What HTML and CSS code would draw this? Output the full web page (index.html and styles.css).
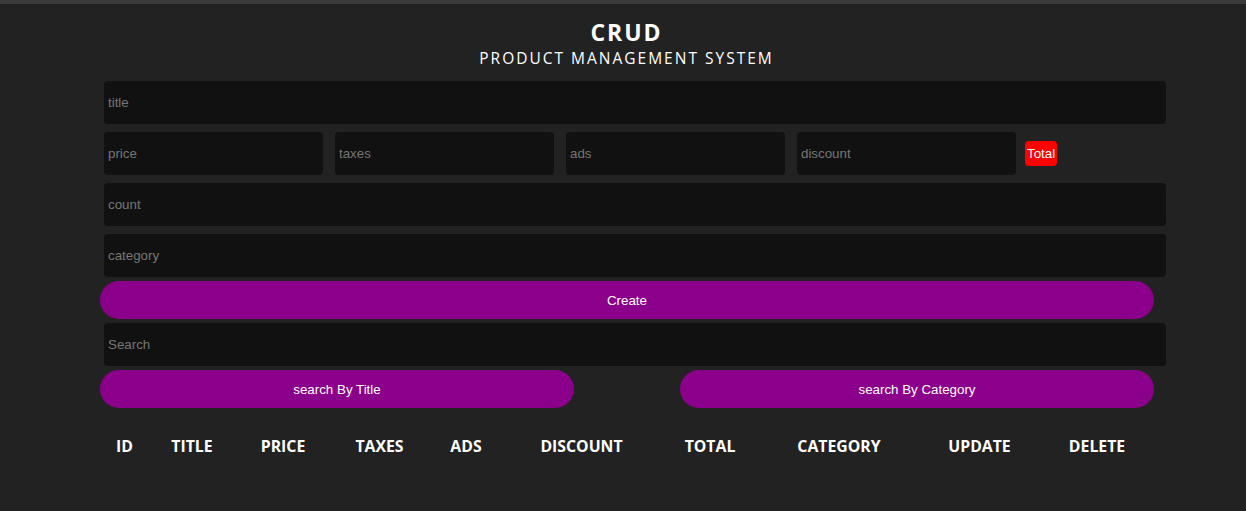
FILE: index.html
```html
<!DOCTYPE html>
<html>
<head>
<meta charset="utf-8">
<link rel="stylesheet" href="styles.css">
</head>
<body>
<div class="topbar"></div>
<header class="head">
  <h1 class="brand">CRUD</h1>
  <p class="sub">Product Management System</p>
</header>
<main class="crud">
  <div class="inputs">
    <input class="field" type="text" placeholder="title">
    <div class="price">
      <input class="field small" type="text" placeholder="price">
      <input class="field small" type="text" placeholder="taxes">
      <input class="field small" type="text" placeholder="ads">
      <input class="field small" type="text" placeholder="discount">
      <small class="total">Total</small>
    </div>
    <input class="field" type="text" placeholder="count">
    <input class="field" type="text" placeholder="category">
  </div>
  <button class="btn wide">Create</button>
  <input class="field search" type="text" placeholder="Search">
  <div class="btn-row">
    <button class="btn half">search By Title</button>
    <button class="btn half">search By Category</button>
  </div>
  <div class="thead">
    <span>ID</span><span>Title</span><span>Price</span><span>Taxes</span><span>Ads</span><span>Discount</span><span>Total</span><span>Category</span><span>Update</span><span>Delete</span>
  </div>
</main>
</body>
</html>
```
FILE: styles.css
```css
* { margin: 0; padding: 0; box-sizing: border-box; }
html, body { background: #222222; }
body {
  color: #fff;
  font-family: "Liberation Sans", Arial, sans-serif;
  height: 511px;
  overflow: hidden;
}
.topbar { height: 4px; background: #3b3b3b; }
.head {
  text-align: center;
  padding-left: 7px;
  font-family: "Open Sans", "Noto Sans", sans-serif;
  text-transform: uppercase;
  padding-top: 13px;
}
.brand {
  font-size: 23px;
  font-weight: 700;
  letter-spacing: 2px;
  line-height: 30px;
}
.sub {
  font-size: 15.5px;
  font-weight: 400;
  letter-spacing: 2px;
  line-height: 20px;
  margin-top: 1px;
}
.crud {
  margin-left: 100px;
  width: 1066px;
  padding-top: 13px;
}
.inputs { display: flex; flex-direction: column; gap: 8px; padding-left: 4px; }
.field {
  display: block;
  height: 43px;
  width: 1062px;
  border: none;
  outline: none;
  background: #111111;
  border-radius: 4px;
  padding: 0 4px;
  color: #fff;
  font-family: "Liberation Sans", Arial, sans-serif;
  font-size: 13.33px;
}
.field::placeholder { color: #767676; }
.price { display: flex; align-items: center; gap: 12px; }
.field.small { width: 219px; }
.total {
  background: #ff0000;
  color: #fff;
  font-size: 13.33px;
  line-height: 25px;
  height: 25px;
  padding: 0 2px;
  border-radius: 4px;
  margin-left: -3px;
}
.btn {
  display: block;
  height: 38px;
  border: none;
  background: #8b008b;
  color: #fff;
  border-radius: 19px;
  font-family: "Liberation Sans", Arial, sans-serif;
  font-size: 13.33px;
}
.wide { width: 1054px; margin-top: 4px; }
.search { margin-top: 4px; margin-left: 4px; }
.btn-row { display: flex; justify-content: space-between; width: 1054px; margin-top: 4px; }
.half { width: 474px; }
.thead {
  display: grid;
  grid-template-columns: 41px 94px 88px 105px 68px 163px 94px 164px 117px 118px;
  margin-left: 4px;
  margin-top: 28px;
  font-family: "Open Sans", "Noto Sans", sans-serif;
  font-weight: 700;
  font-size: 15.8px;
  text-transform: uppercase;
  line-height: 20px;
}
.thead span { text-align: center; }
```
